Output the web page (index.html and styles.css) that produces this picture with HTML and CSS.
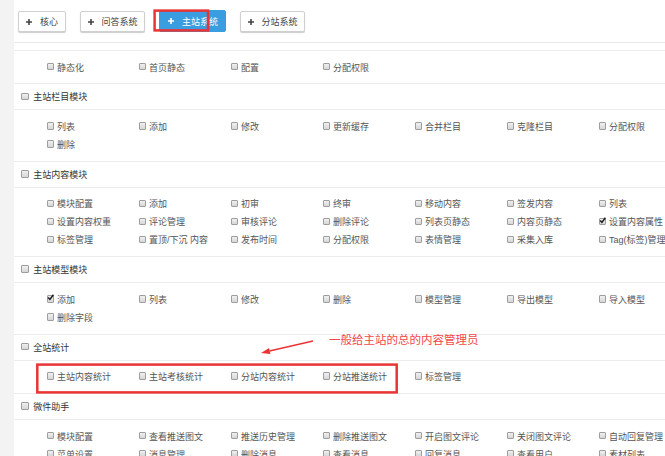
FILE: index.html
```html
<!DOCTYPE html>
<html lang="zh-CN">
<head>
<meta charset="utf-8">
<title>权限设置</title>
<link rel="stylesheet" href="styles.css">
</head>
<body>
<div class="page">
  <div class="tabbar">
    <span class="btn"><svg class="plus" viewBox="0 0 6 6"><path d="M3 0V6M0 3H6"/></svg>核心</span>
    <span class="btn"><svg class="plus" viewBox="0 0 6 6"><path d="M3 0V6M0 3H6"/></svg>问答系统</span>
    <span class="btn btn-primary"><svg class="plus" viewBox="0 0 6 6"><path d="M3 0V6M0 3H6"/></svg>主站系统</span>
    <span class="btn"><svg class="plus" viewBox="0 0 6 6"><path d="M3 0V6M0 3H6"/></svg>分站系统</span>
  </div>
  <ul class="perm-list">
    <li class="items">
      <label class="item"><span class="cb"></span>静态化</label>
      <label class="item"><span class="cb"></span>首页静态</label>
      <label class="item"><span class="cb"></span>配置</label>
      <label class="item"><span class="cb"></span>分配权限</label>
    </li>
    <li class="sec-head"><span class="cb"></span>主站栏目模块</li>
    <li class="items">
      <label class="item"><span class="cb"></span>列表</label>
      <label class="item"><span class="cb"></span>添加</label>
      <label class="item"><span class="cb"></span>修改</label>
      <label class="item"><span class="cb"></span>更新缓存</label>
      <label class="item"><span class="cb"></span>合并栏目</label>
      <label class="item"><span class="cb"></span>克隆栏目</label>
      <label class="item"><span class="cb"></span>分配权限</label>
      <label class="item"><span class="cb"></span>删除</label>
    </li>
    <li class="sec-head"><span class="cb"></span>主站内容模块</li>
    <li class="items">
      <label class="item"><span class="cb"></span>模块配置</label>
      <label class="item"><span class="cb"></span>添加</label>
      <label class="item"><span class="cb"></span>初审</label>
      <label class="item"><span class="cb"></span>终审</label>
      <label class="item"><span class="cb"></span>移动内容</label>
      <label class="item"><span class="cb"></span>签发内容</label>
      <label class="item"><span class="cb"></span>列表</label>
      <label class="item"><span class="cb"></span>设置内容权重</label>
      <label class="item"><span class="cb"></span>评论管理</label>
      <label class="item"><span class="cb"></span>审核评论</label>
      <label class="item"><span class="cb"></span>删除评论</label>
      <label class="item"><span class="cb"></span>列表页静态</label>
      <label class="item"><span class="cb"></span>内容页静态</label>
      <label class="item"><span class="cb checked"><svg viewBox="0 0 7 7"><path d="M1.2 3.6L2.9 5.4L6.4 0.8"/></svg></span>设置内容属性</label>
      <label class="item"><span class="cb"></span>标签管理</label>
      <label class="item"><span class="cb"></span>置顶/下沉 内容</label>
      <label class="item"><span class="cb"></span>发布时间</label>
      <label class="item"><span class="cb"></span>分配权限</label>
      <label class="item"><span class="cb"></span>表情管理</label>
      <label class="item"><span class="cb"></span>采集入库</label>
      <label class="item"><span class="cb"></span>Tag(标签)管理</label>
    </li>
    <li class="sec-head"><span class="cb"></span>主站模型模块</li>
    <li class="items">
      <label class="item"><span class="cb checked"><svg viewBox="0 0 7 7"><path d="M1.2 3.6L2.9 5.4L6.4 0.8"/></svg></span>添加</label>
      <label class="item"><span class="cb"></span>列表</label>
      <label class="item"><span class="cb"></span>修改</label>
      <label class="item"><span class="cb"></span>删除</label>
      <label class="item"><span class="cb"></span>模型管理</label>
      <label class="item"><span class="cb"></span>导出模型</label>
      <label class="item"><span class="cb"></span>导入模型</label>
      <label class="item"><span class="cb"></span>删除字段</label>
    </li>
    <li class="sec-head"><span class="cb"></span>全站统计</li>
    <li class="items">
      <label class="item"><span class="cb"></span>主站内容统计</label>
      <label class="item"><span class="cb"></span>主站考核统计</label>
      <label class="item"><span class="cb"></span>分站内容统计</label>
      <label class="item"><span class="cb"></span>分站推送统计</label>
      <label class="item"><span class="cb"></span>标签管理</label>
    </li>
    <li class="sec-head"><span class="cb"></span>微件助手</li>
    <li class="items">
      <label class="item"><span class="cb"></span>模块配置</label>
      <label class="item"><span class="cb"></span>查看推送图文</label>
      <label class="item"><span class="cb"></span>推送历史管理</label>
      <label class="item"><span class="cb"></span>删除推送图文</label>
      <label class="item"><span class="cb"></span>开启图文评论</label>
      <label class="item"><span class="cb"></span>关闭图文评论</label>
      <label class="item"><span class="cb"></span>自动回复管理</label>
      <label class="item"><span class="cb"></span>菜单设置</label>
      <label class="item"><span class="cb"></span>消息管理</label>
      <label class="item"><span class="cb"></span>删除消息</label>
      <label class="item"><span class="cb"></span>查看消息</label>
      <label class="item"><span class="cb"></span>回复消息</label>
      <label class="item"><span class="cb"></span>查看用户</label>
      <label class="item"><span class="cb"></span>素材列表</label>
    </li>
  </ul>
</div>
<svg class="marks" width="665" height="456" viewBox="0 0 665 456">
  <rect x="154.6" y="10.6" width="53.4" height="19.8"/>
  <rect x="37.3" y="364.6" width="359.4" height="27.8"/>
  <line x1="313" y1="341" x2="269.5" y2="351"/>
  <polygon class="head" points="261,353 270.4,353.9 269.1,348.1"/>
</svg>
<div class="note">一般给主站的总的内容管理员</div>
</body>
</html>
```
FILE: styles.css
```css
html {
  overflow: hidden;
}

body {
  margin: 0;
  position: relative;
  background: #f3f3f4;
  font-family: "Liberation Sans", "Noto Sans CJK SC", sans-serif;
  font-size: 9px;
  color: #555;
}

.page {
  margin-left: 14px;
  background: #fff;
  min-height: 456px;
  overflow: hidden;
}

.tabbar {
  display: flex;
  gap: 14px;
  height: 43px;
  box-sizing: border-box;
  padding: 11px 0 0 4px;
  border-bottom: 1px solid #e7eaec;
}

.btn {
  display: flex;
  align-items: center;
  gap: 8px;
  height: 21px;
  box-sizing: border-box;
  padding: 0 6.5px 0 7px;
  background: #fff;
  border: 1px solid #d0d0d0;
  border-radius: 2px;
  box-shadow: 0 1px 1px rgba(0, 0, 0, 0.2);
  color: #444;
  white-space: nowrap;
}

.btn-primary {
  height: 22px;
  margin-top: -1px;
  padding-left: 8px;
  background: #3a9de0;
  border-color: #3a9de0;
  box-shadow: none;
  color: #fff;
}

.plus {
  width: 6px;
  height: 6px;
  flex: none;
}

.plus path {
  stroke: #444;
  stroke-width: 1.6;
  fill: none;
}

.btn-primary .plus path {
  stroke: #fff;
}

.perm-list {
  list-style: none;
  margin: 7px 0 0;
  padding: 0;
}

.perm-list > li {
  border-top: 1px solid #ececec;
}

.items {
  display: grid;
  grid-template-columns: repeat(7, 92px);
  grid-auto-rows: 18px;
  padding: 7.2px 0 7.2px 32.7px;
}

.item {
  display: flex;
  align-items: center;
  gap: 2.7px;
  white-space: nowrap;
}

.sec-head {
  display: flex;
  align-items: center;
  gap: 4.7px;
  height: 25px;
  padding-left: 7px;
  color: #333;
}

.cb {
  flex: none;
  display: inline-block;
  width: 7.5px;
  height: 7.5px;
  box-sizing: border-box;
  margin-top: -1px;
  border: 1px solid #9e9e9e;
  border-radius: 1px;
  background: linear-gradient(#f0f0f0, #d6d6d6);
  position: relative;
}

.cb svg {
  position: absolute;
  left: -1px;
  top: -2px;
  width: 7px;
  height: 7px;
  overflow: visible;
}

.cb svg path {
  fill: none;
  stroke: #1a1a1a;
  stroke-width: 1.5;
}

.marks {
  position: absolute;
  left: 0;
  top: 0;
  pointer-events: none;
}

.marks rect {
  fill: none;
  stroke: #ea3434;
  stroke-width: 2.5;
}

.marks line {
  stroke: #ea3434;
  stroke-width: 1.4;
}

.marks .head {
  fill: #ea3434;
}

.note {
  position: absolute;
  left: 329px;
  top: 331.5px;
  font-family: "Noto Sans CJK SC", sans-serif;
  font-size: 11.5px;
  line-height: 14px;
  color: #f24747;
  white-space: nowrap;
}
```
